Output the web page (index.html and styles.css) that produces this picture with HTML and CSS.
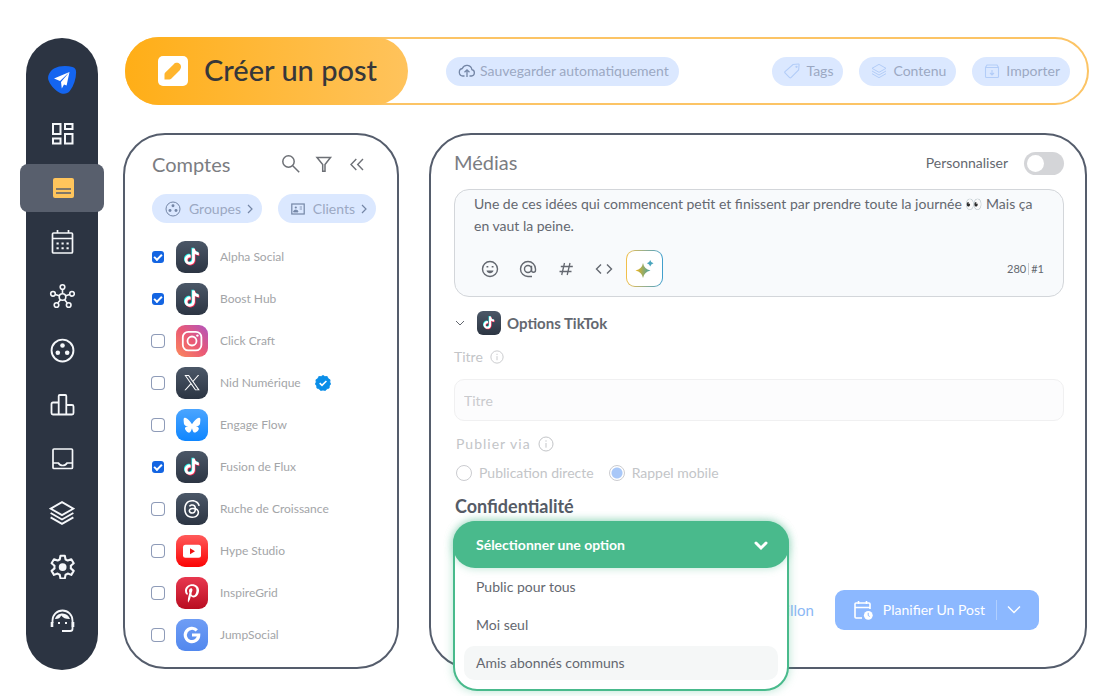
FILE: index.html
```html
<!DOCTYPE html>
<html lang="fr">

<head>
    <meta charset="UTF-8">
    <meta name="viewport" content="width=device-width, initial-scale=1">
    <title>Créer un post</title>
    <link rel="stylesheet" href="styles.css">
</head>

<body>
    <!-- shared icons -->
    <svg class="sprite" aria-hidden="true">
        <defs>
            <path id="note" d="M12.525.02c1.31-.02 2.61-.01 3.91-.02.08 1.53.63 3.09 1.75 4.17 1.12 1.11 2.7 1.62 4.24 1.79v4.03c-1.44-.05-2.89-.35-4.2-.97-.57-.26-1.1-.59-1.62-.93-.01 2.92.01 5.84-.02 8.75-.08 1.4-.54 2.79-1.35 3.94-1.31 1.92-3.58 3.17-5.91 3.21-1.43.08-2.86-.31-4.08-1.03-2.02-1.19-3.44-3.37-3.65-5.71-.02-.5-.03-1-.01-1.49.18-1.9 1.12-3.72 2.58-4.96 1.66-1.44 3.98-2.13 6.15-1.72.02 1.48-.04 2.96-.04 4.44-.99-.32-2.15-.23-3.02.37-.63.41-1.11 1.04-1.36 1.75-.21.51-.15 1.07-.14 1.61.24 1.64 1.82 3.02 3.5 2.87 1.12-.01 2.19-.66 2.77-1.61.19-.33.4-.67.41-1.06.1-1.79.06-3.57.07-5.36.01-4.03-.01-8.05.02-12.07z"/>
            <symbol id="tiktok" viewBox="0 0 32 32">
                <g transform="translate(7.6 7.4) scale(.68)">
                    <use href="#note" x="-1" y="-1" fill="#25f4ee"/>
                    <use href="#note" x="1" y="1" fill="#fe2c55"/>
                    <use href="#note" fill="#fff"/>
                </g>
            </symbol>
            <symbol id="layers" viewBox="0 0 24 24">
                <path d="M12 2 22.500 8 12 14 1.500 8zM1.500 12 12 18l10.500-6M1.500 16 12 22l10.500-6"/>
            </symbol>
            <symbol id="group" viewBox="0 0 24 24">
                <circle cx="12" cy="12" r="10.500"/>
                <g fill="currentColor" stroke="none">
                    <circle cx="12" cy="7.200" r="2.200"/>
                    <circle cx="7.500" cy="14.200" r="2.200"/>
                    <circle cx="16.500" cy="14.200" r="2.200"/>
                </g>
            </symbol>
            <symbol id="info" viewBox="0 0 24 24">
                <circle cx="12" cy="12" r="10.500"/>
                <path d="M12 10.500v7M12 6.500v2"/>
            </symbol>
        </defs>
    </svg>

    <div class="app">
        <nav class="sidebar">
            <a href="#" class="nav-item" aria-label="Accueil">
                <svg width="30" height="30" viewBox="0 0 30 30">
                    <path d="M7 3.500C12 .5 20 .3 25.500 2c2.700.8 3.700 2.500 3.600 5.500-.1 6-2.100 13-6.300 18.500-2.500 3.200-7.100 3.600-11 1.200C6.500 24 2.800 19.200 1.400 15 .2 11 2.800 6 7 3.500z" fill="#1465f0"/>
                    <path d="M22.500 7 7 13.500l6 2.600zM22.500 7 14 17l.8 6.500 2.200-4 2.600 1z" fill="#fff"/>
                </svg>
            </a>
            <a href="#" class="nav-item" aria-label="Tableau de bord">
                <svg class="icon" width="24" height="24" viewBox="0 0 24 24" stroke-width="2">
                    <rect x="3" y="2" width="7.500" height="10"/>
                    <rect x="15" y="2" width="7.500" height="5"/>
                    <rect x="3" y="16.500" width="7.500" height="5"/>
                    <rect x="15" y="12" width="7.500" height="9.500"/>
                </svg>
            </a>
            <a href="#" class="nav-item active" aria-label="Posts">
                <svg width="24" height="24" viewBox="0 0 24 24">
                    <rect x="3" y="2" width="21" height="20" rx="2" fill="#ffc55c"/>
                    <path d="M6 13h15M6 17h15" stroke="#585f6d" stroke-width="1.600"/>
                </svg>
            </a>
            <a href="#" class="nav-item" aria-label="Calendrier">
                <svg class="icon" width="26" height="26" viewBox="0 0 24 26" stroke-width="1.700">
                    <rect x="2.500" y="4" width="20" height="20" rx="1"/>
                    <path d="M2.500 9.500h20M7.500 1v3M18.500 1v3"/>
                    <path d="M6.500 14.500h2.200M11.500 14.500h2.200M16.500 14.500h2.200M6.500 19.200h2.200M11.500 19.200h2.200M16.500 19.200h2.200" stroke-width="2"/>
                </svg>
            </a>
            <a href="#" class="nav-item" aria-label="Réseau">
                <svg class="icon" width="26" height="26" viewBox="0 0 26 26" stroke-width="1.600">
                    <circle cx="13.500" cy="14" r="3.300"/>
                    <circle cx="13.500" cy="4" r="2.300"/>
                    <circle cx="4" cy="10.800" r="2.300"/>
                    <circle cx="23" cy="10.800" r="2.300"/>
                    <circle cx="7.500" cy="22" r="2.300"/>
                    <circle cx="19.700" cy="22" r="2.300"/>
                    <path d="M13.500 6.500v4M6.300 11.500l4 1.300M20.700 11.500l-4 1.300M8.800 20l2.700-3.300M18.300 20l-2.700-3.300"/>
                </svg>
            </a>
            <a href="#" class="nav-item" aria-label="Groupes">
                <svg class="icon" width="25" height="25" stroke-width="1.800"><use href="#group"/></svg>
            </a>
            <a href="#" class="nav-item" aria-label="Statistiques">
                <svg class="icon" width="25" height="24" viewBox="0 0 25 24" stroke-width="1.800" stroke-linejoin="round">
                    <path d="M8.700 22.500V4q0-1 1-1h5.600q1 0 1 1v18.500M8.700 10.500H3q-1.500 0-1.500 1.500v9q0 1.500 1.500 1.500h19q1.500 0 1.500-1.500v-6.500q0-1.500-1.500-1.500h-5.700"/>
                </svg>
            </a>
            <a href="#" class="nav-item" aria-label="Boîte de réception">
                <svg class="icon" width="24" height="24" viewBox="0 0 24 24" stroke-width="1.700">
                    <rect x="3" y="3" width="19.500" height="19.500" rx="1"/>
                    <path d="M3 17h5.300c1 1.700 2.500 2.500 4.400 2.500s3.400-.8 4.400-2.500h5.400"/>
                </svg>
            </a>
            <a href="#" class="nav-item" aria-label="Contenu">
                <svg class="icon" width="26" height="26" stroke-width="1.700"><use href="#layers" y="1"/></svg>
            </a>
            <a href="#" class="nav-item" aria-label="Réglages">
                <svg class="icon" width="26" height="26" viewBox="0 0 24 24" stroke-width="1.900" stroke-linejoin="round">
                    <g transform="translate(.6 1)">
                        <path d="M10 1.500h4l.7 3.500q1 .4 2 1l3.300-1.200 2.200 3.700-2.700 2.300q.2 1.200 0 2.400l2.700 2.300-2.200 3.700-3.300-1.200q-1 .6-2 1l-.7 3.500h-4L9.300 19q-1-.4-2-1L4 19.200l-2.200-3.700 2.700-2.300q-.2-1.200 0-2.400L1.800 8.500 4 4.800 7.300 6q1-.6 2-1z"/>
                        <circle cx="12" cy="12" r="3.600" fill="currentColor" stroke="none"/>
                    </g>
                </svg>
            </a>
            <a href="#" class="nav-item" aria-label="Assistance">
                <svg class="icon" width="26" height="26" viewBox="0 0 26 26" stroke-width="1.800">
                    <path d="M3.500 16v-2.500a10 10 0 0 1 20 0V22q0 2-2.500 2h-8"/>
                    <path d="M3 15v5M24 15v5" stroke-width="2.600"/>
                    <path d="M6 12c3.200.2 5.200-1 6.200-3.500 2 2.500 4.800 3.700 8.800 3.500-1.200-3.300-3.800-5.500-7.500-5.500S7 8.700 6 12z" fill="currentColor" stroke="none"/>
                    <path d="M9 16h2M16 16h2" stroke-width="2"/>
                </svg>
            </a>
        </nav>

        <main class="main">
            <header class="topbar">
                <div class="topbar-title">
                    <svg width="30" height="30" viewBox="0 0 30 30">
                        <rect width="30" height="30" rx="5" fill="#fff"/>
                        <path d="M6.500 23.500v-5c0-.8.3-1.400.8-1.900l8.200-8.200c2.200-2.200 4.800-1.800 6.300-.3s1.900 4.100-.3 6.300l-8.300 8.300c-.5.500-1.200.8-1.900.8z" fill="#ffb52d"/>
                    </svg>
                    <h1>Créer un post</h1>
                </div>
                <button type="button" class="chip chip-save">
                    <svg class="icon" width="18" height="16" viewBox="0 0 18 16" stroke-width="1.300">
                        <path d="M6.500 13H4.800a3.800 3.800 0 0 1-.5-7.500 5 5 0 0 1 9.600 1.200A3.200 3.200 0 0 1 13.500 13h-2M9 14V7M6.500 9.200 9 6.800l2.500 2.400"/>
                    </svg>
                    Sauvegarder automatiquement
                </button>
                <div class="topbar-actions">
                    <button type="button" class="chip chip-pale">
                        <svg class="icon" width="16" height="16" viewBox="0 0 16 16" stroke-width="1.100">
                            <path d="m9 1.500 5.500-.5q.6 0 .6.600L14.600 7 7 14.600q-.7.600-1.400 0L1 10q-.6-.7 0-1.400z"/>
                            <circle cx="12.500" cy="3.800" r=".6"/>
                        </svg>
                        Tags
                    </button>
                    <button type="button" class="chip chip-pale">
                        <svg class="icon" width="16" height="16" stroke-width="1.500"><use href="#layers"/></svg>
                        Contenu
                    </button>
                    <button type="button" class="chip chip-pale">
                        <svg class="icon" width="16" height="16" viewBox="0 0 16 16" stroke-width="1.100">
                            <path d="M1.500 4.500v9q0 1 1 1h11q1 0 1-1v-9l-1.500-2.500H3zh13M8 7v5M6 10l2 2 2-2"/>
                        </svg>
                        Importer
                    </button>
                </div>
            </header>

            <div class="panels">
                <section class="panel accounts">
                    <div class="accounts-head">
                        <h2>Comptes</h2>
                        <button type="button" class="icon-btn" aria-label="Rechercher">
                            <svg class="icon" width="20" height="20" viewBox="0 0 20 20" stroke-width="1.500">
                                <circle cx="7.500" cy="6.500" r="5.700"/>
                                <path d="m11.700 10.700 6.500 6.500"/>
                            </svg>
                        </button>
                        <button type="button" class="icon-btn" aria-label="Filtrer">
                            <svg class="icon" width="20" height="20" viewBox="0 0 20 20" stroke-width="1.500">
                                <path d="M3 2.500h13.500L11 9.500v6.700H8.700V9.500z"/>
                            </svg>
                        </button>
                        <button type="button" class="icon-btn" aria-label="Replier">
                            <svg class="icon" width="20" height="20" viewBox="0 0 20 20" stroke-width="1.400">
                                <path d="M9.300 4 4 9.500 9.300 15M16 4l-5.300 5.500L16 15"/>
                            </svg>
                        </button>
                    </div>
                    <div class="filters">
                        <button type="button" class="chip">
                            <svg class="icon" width="16" height="16" stroke-width="1.500"><use href="#group"/></svg>
                            Groupes
                            <svg class="icon arrow" width="6" height="10" viewBox="0 0 6 10" stroke-width="1.200"><path d="m1 1 4 4-4 4"/></svg>
                        </button>
                        <button type="button" class="chip">
                            <svg class="icon" width="14" height="12" viewBox="0 0 14 12" stroke-width="1.200">
                                <rect x=".8" y="1" width="12.400" height="10"/>
                                <path d="M2.500 9q0-2 2.300-2T7 9zM8.700 4H11M8.700 6H11" fill="currentColor" stroke-width=".8"/>
                                <circle cx="4.800" cy="4.500" r="1.100" fill="currentColor" stroke="none"/>
                            </svg>
                            Clients
                            <svg class="icon arrow" width="6" height="10" viewBox="0 0 6 10" stroke-width="1.200"><path d="m1 1 4 4-4 4"/></svg>
                        </button>
                    </div>
                    <ul class="account-list">
                        <li><label>
                            <input type="checkbox" checked>
                            <svg class="logo dark"><use href="#tiktok"/></svg>
                            <span>Alpha Social</span>
                        </label></li>
                        <li><label>
                            <input type="checkbox" checked>
                            <svg class="logo dark"><use href="#tiktok"/></svg>
                            <span>Boost Hub</span>
                        </label></li>
                        <li><label>
                            <input type="checkbox">
                            <svg class="logo instagram" viewBox="0 0 32 32" fill="none" stroke="#fff" stroke-width="1.800">
                                <rect x="6.800" y="6.800" width="18.600" height="18.600" rx="5.500"/>
                                <circle cx="16" cy="16" r="4.500"/>
                                <circle cx="21.400" cy="10.600" r="1.200" fill="#fff" stroke="none"/>
                            </svg>
                            <span>Click Craft</span>
                        </label></li>
                        <li><label>
                            <input type="checkbox">
                            <svg class="logo dark" viewBox="0 0 32 32">
                                <path transform="translate(8.400 8) scale(.64)" fill="#fff" d="M14.258 10.152L23.176 0h-2.113l-7.747 8.813L7.133 0H0l9.352 13.328L0 23.973h2.113l8.176-9.309 6.531 9.309h7.133zm-2.895 3.293l-.949-1.328L2.875 1.560h3.246l6.086 8.523.945 1.328 7.910 11.078h-3.246z"/>
                            </svg>
                            <span>Nid Numérique</span>
                            <svg class="verified" width="16" height="16" viewBox="0 0 16 16">
                                <path d="m8 .4 1.900 1.200 2.300-.1.900 2.100 2 1.200-.3 2.300.8 1.900-1.300 1.900-.2 2.200-2.200.7-1.500 1.700L8 15.100l-2.400.4-1.500-1.700-2.200-.7-.2-2.200L.4 9l.8-1.900-.3-2.300 2-1.200.9-2.100 2.300.1z" fill="#0a8ee8" stroke="#0a8ee8" stroke-linejoin="round" stroke-width=".8"/>
                                <path d="m4.700 8.200 2.300 2.200 4.400-4.400" fill="none" stroke="#fff" stroke-width="1.600"/>
                            </svg>
                        </label></li>
                        <li><label>
                            <input type="checkbox">
                            <svg class="logo bluesky" viewBox="0 0 32 32">
                                <path transform="translate(7.600 7.800) scale(.7)" fill="#fff" d="M12 10.800c-1.087-2.114-4.046-6.053-6.798-7.995C2.566.944 1.561 1.266.902 1.565.139 1.908 0 3.080 0 3.768c0 .69.378 5.650.624 6.479.815 2.736 3.713 3.660 6.383 3.364-3.912.58-7.387 2.005-2.830 7.078 5.013 5.190 6.870-1.113 7.823-4.308.953 3.195 2.050 9.271 7.733 4.308 4.267-4.308 1.172-6.498-2.740-7.078 2.670.297 5.568-.628 6.383-3.364.246-.828.624-5.790.624-6.478 0-.69-.139-1.861-.902-2.206-.659-.298-1.664-.62-4.300 1.240C16.046 4.748 13.087 8.687 12 10.800z"/>
                            </svg>
                            <span>Engage Flow</span>
                        </label></li>
                        <li><label>
                            <input type="checkbox" checked>
                            <svg class="logo dark"><use href="#tiktok"/></svg>
                            <span>Fusion de Flux</span>
                        </label></li>
                        <li><label>
                            <input type="checkbox">
                            <svg class="logo dark" viewBox="0 0 32 32">
                                <path transform="translate(7 7) scale(.75)" fill="#fff" d="M12.186 24h-.007c-3.581-.024-6.334-1.205-8.184-3.509C2.350 18.440 1.500 15.586 1.472 12.010v-.017c.03-3.579.879-6.430 2.525-8.482C5.845 1.205 8.600.024 12.180 0h.014c2.746.02 5.043.725 6.826 2.098 1.677 1.290 2.858 3.130 3.509 5.467l-2.040.569c-1.104-3.960-3.898-5.984-8.304-6.015-2.910.022-5.110.936-6.540 2.717C4.307 6.504 3.616 8.914 3.589 12c.027 3.086.718 5.496 2.057 7.164 1.430 1.783 3.631 2.698 6.540 2.717 2.623-.02 4.358-.631 5.800-2.045 1.647-1.613 1.618-3.593 1.090-4.798-.31-.71-.873-1.300-1.634-1.750-.192 1.352-.622 2.446-1.284 3.272-.886 1.102-2.140 1.704-3.730 1.790-1.202.065-2.361-.218-3.259-.801-1.063-.689-1.685-1.740-1.752-2.964-.065-1.190.408-2.285 1.330-3.082.88-.76 2.119-1.207 3.583-1.291a13.853 13.853 0 0 1 3.020.142c-.126-.742-.375-1.332-.75-1.757-.513-.586-1.308-.883-2.359-.89h-.029c-.844 0-1.992.232-2.721 1.320L7.734 7.847c.98-1.454 2.568-2.256 4.478-2.256h.044c3.194.02 5.097 1.975 5.287 5.388.108.046.216.094.321.142 1.490.7 2.580 1.761 3.154 3.070.797 1.820.871 4.790-1.548 7.158-1.850 1.810-4.094 2.628-7.277 2.650zm1.003-11.690c-.242 0-.487.007-.739.021-1.836.103-2.980.946-2.916 2.143.067 1.256 1.452 1.839 2.784 1.767 1.224-.065 2.818-.543 3.086-3.710a10.500 10.500 0 0 0-2.215-.221z"/>
                            </svg>
                            <span>Ruche de Croissance</span>
                        </label></li>
                        <li><label>
                            <input type="checkbox">
                            <svg class="logo youtube" viewBox="0 0 32 32">
                                <rect x="7" y="9.700" width="18" height="13" rx="2.500" fill="#fff"/>
                                <path d="m14 13.200 5 3-5 3z" fill="#f01010"/>
                            </svg>
                            <span>Hype Studio</span>
                        </label></li>
                        <li><label>
                            <input type="checkbox">
                            <svg class="logo pinterest" viewBox="0 0 32 32">
                                <path transform="translate(9 7) scale(.0365)" fill="#fff" d="M204 6.500C101.400 6.500 0 74.900 0 185.600 0 256 39.600 296 63.600 296c9.900 0 15.600-27.600 15.600-35.400 0-9.300-23.700-29.100-23.700-67.800 0-80.400 61.200-137.400 140.400-137.400 68.100 0 118.500 38.700 118.500 109.800 0 53.100-21.300 152.700-90.300 152.700-24.900 0-46.200-18-46.200-43.800 0-37.800 26.400-74.400 26.400-113.400 0-66.200-93.900-54.200-93.900 25.800 0 16.800 2.100 35.400 9.600 50.700-13.800 59.400-42 147.900-42 209.100 0 18.900 2.700 37.500 4.500 56.400 3.400 3.800 1.700 3.400 6.900 1.500 50.400-69 48.600-82.500 71.400-172.800 12.300 23.400 44.100 36 69.300 36 106.200 0 153.900-103.500 153.900-196.800C384 71.300 298.200 6.500 204 6.500z"/>
                            </svg>
                            <span>InspireGrid</span>
                        </label></li>
                        <li><label>
                            <input type="checkbox">
                            <svg class="logo google" viewBox="0 0 32 32" fill="none" stroke="#fff" stroke-width="3.200">
                                <path d="M20.800 11.300A6.700 6.700 0 1 0 22.700 16H16"/>
                            </svg>
                            <span>JumpSocial</span>
                        </label></li>
                    </ul>
                </section>

                <section class="panel editor">
                    <div class="editor-head">
                        <h2>Médias</h2>
                        <label class="switch-label" for="custom">Personnaliser</label>
                        <input type="checkbox" class="switch" id="custom">
                    </div>

                    <div class="composer">
                        <textarea rows="2" aria-label="Texte du post">Une de ces idées qui commencent petit et finissent par prendre toute la journée 👀 Mais ça en vaut la peine.</textarea>
                        <div class="tools">
                            <button type="button" class="tool" aria-label="Emoji">
                                <svg class="icon" width="18" height="18" viewBox="0 0 18 18" stroke-width="1.400">
                                    <circle cx="9" cy="9" r="7.500"/>
                                    <path d="M5.500 6.800h1.800M10.700 6.800h1.800" stroke-width="1.600"/>
                                    <path d="M5.500 10.500h7c-.5 1.800-1.800 2.700-3.500 2.700s-3-.9-3.500-2.700z" fill="currentColor" stroke="none"/>
                                </svg>
                            </button>
                            <button type="button" class="tool" aria-label="Mention">
                                <svg class="icon" width="18" height="18" viewBox="0 0 18 18" stroke-width="1.400">
                                    <circle cx="9" cy="9" r="3.500"/>
                                    <path d="M12.500 5.800v4.400a2 2 0 0 0 4 0V9A7.500 7.500 0 1 0 9 16.500h4"/>
                                </svg>
                            </button>
                            <button type="button" class="tool" aria-label="Hashtag">
                                <svg class="icon" width="18" height="18" viewBox="0 0 18 18" stroke-width="1.300">
                                    <path d="M7.500 3 4.700 15M13 3l-2.800 12M3.800 6.500h12M2.500 11.500h12"/>
                                </svg>
                            </button>
                            <button type="button" class="tool" aria-label="Code">
                                <svg class="icon" width="18" height="18" viewBox="0 0 18 18" stroke-width="1.400">
                                    <path d="M6 4.500 1.500 9 6 13.500M12 4.500 16.500 9 12 13.500"/>
                                </svg>
                            </button>
                            <button type="button" class="ai-btn" aria-label="Assistant IA">
                                <svg width="20" height="20" viewBox="0 0 20 20">
                                    <linearGradient id="spark" x1="0" x2="1"><stop offset="0" stop-color="#f0b41c"/><stop offset="1" stop-color="#45a3a8"/></linearGradient>
                                    <path d="M8 4q1 6 7.500 7.500Q9 13 8 19q-1-6-7.500-7.500Q7 10 8 4z" fill="url(#spark)"/>
                                    <path d="M15.200 1q.6 2.700 3.300 3.300-2.700.6-3.300 3.300-.6-2.700-3.300-3.300 2.700-.6 3.300-3.300z" fill="#4aa5bd"/>
                                </svg>
                            </button>
                            <div class="counter"><span>280</span><span>#1</span></div>
                        </div>
                    </div>

                    <div class="options-head">
                        <svg class="icon" width="12" height="12" viewBox="0 0 12 12" stroke-width="1"><path d="m2 4 4 4 4-4"/></svg>
                        <svg class="logo dark small"><use href="#tiktok"/></svg>
                        <h3>Options TikTok</h3>
                    </div>

                    <div class="field-label">
                        <label for="titre">Titre</label>
                        <svg class="icon" width="14" height="14" stroke-width="1.500"><use href="#info"/></svg>
                    </div>
                    <input type="text" class="text-input" id="titre" placeholder="Titre">

                    <div class="field-label via">
                        <span id="via">Publier via</span>
                        <svg class="icon" width="16" height="16" stroke-width="1.500"><use href="#info"/></svg>
                    </div>
                    <div class="radios" role="radiogroup" aria-labelledby="via">
                        <label><input type="radio" name="via"><span>Publication directe</span></label>
                        <label><input type="radio" name="via" checked><span>Rappel mobile</span></label>
                    </div>

                    <label class="privacy-label" for="privacy">Confidentialité</label>
                    <div class="dropdown">
                        <select id="privacy">
                            <option>Sélectionner une option</option>
                        </select>
                        <svg class="icon dropdown-arrow" width="14" height="10" viewBox="0 0 14 10" stroke-width="3" stroke-linecap="round"><path d="m2 2 5 5 5-5"/></svg>
                        <ul class="menu" role="listbox" aria-label="Confidentialité">
                            <li role="option">Public pour tous</li>
                            <li role="option">Moi seul</li>
                            <li role="option" class="hover">Amis abonnés communs</li>
                        </ul>
                    </div>

                    <div class="editor-foot">
                        <a href="#" class="draft">Brouillon</a>
                        <button type="button" class="schedule">
                            <svg class="icon" width="20" height="20" viewBox="0 0 20 20" stroke-width="1.600">
                                <path d="M9 18H3q-1 0-1-1V4q0-1 1-1h13q1 0 1 1v5M2 7.500h15M5.500 1v3M13.500 1v3"/>
                                <circle cx="15.300" cy="15.300" r="4.400" fill="#fff" stroke="none"/>
                                <path d="M15.200 12.800v2.700l1.500 1" stroke="#8cb8ff" stroke-width="1"/>
                            </svg>
                            <span class="schedule-text">Planifier Un Post</span>
                            <svg class="icon" width="14" height="10" viewBox="0 0 14 10" stroke-width="1.400"><path d="m1 1.500 6 6 6-6"/></svg>
                        </button>
                    </div>
                </section>
            </div>
        </main>
    </div>
</body>

</html>
```
FILE: styles.css
```css
* {
    box-sizing: border-box;
}

body {
    margin: 0;
    background-color: #fff;
    color: #646870;
    font-family: Lato, "Liberation Sans", sans-serif;
    font-size: 14px;
    line-height: 20px;
}

h1,
h2,
h3,
ul {
    margin: 0;
    padding: 0;
}

ul {
    list-style: none;
}

button,
input,
select,
textarea {
    font: inherit;
    color: inherit;
}

button {
    border: none;
    padding: 0;
    background: none;
}

svg {
    display: block;
    flex-shrink: 0;
}

.sprite {
    position: absolute;
    width: 0;
    height: 0;
}

.icon {
    fill: none;
    stroke: currentColor;
}

.app {
    display: flex;
    align-items: flex-start;
    gap: 25px;
    padding: 37px 19px 26px 26px;
}

/* sidebar */
.sidebar {
    display: flex;
    flex-direction: column;
    gap: 6px;
    flex: 0 0 72px;
    margin-top: 1px;
    padding: 18px 0 26px;
    border-radius: 36px;
    background-color: #2c3442;
}

.nav-item {
    display: flex;
    align-items: center;
    justify-content: center;
    height: 48px;
    color: #f5f7fa;
}

.nav-item.active {
    margin: 0 -6px;
    border-radius: 8px;
    background-color: #585f6d;
}

/* top bar */
.main {
    flex: 1;
    min-width: 0;
}

.topbar {
    display: flex;
    align-items: center;
    height: 68px;
    margin-left: 2px;
    padding-right: 17px;
    border: 2px solid #fcc465;
    border-radius: 34px;
}

.topbar-title {
    display: flex;
    align-items: center;
    gap: 16px;
    width: 283px;
    height: 68px;
    margin: -2px 38px -2px -2px;
    padding-left: 33px;
    border-radius: 34px;
    background: linear-gradient(90deg, #ffae17, #ffc35c);
}

.topbar-title h1 {
    padding-bottom: 2px;
    color: #36373a;
    font-size: 29px;
    font-weight: 500;
    line-height: 36px;
}

.topbar-actions {
    display: flex;
    gap: 16px;
    margin-left: auto;
}

.chip {
    display: flex;
    align-items: center;
    gap: 8px;
    height: 29px;
    padding: 0 10px 0 12px;
    border-radius: 15px;
    background-color: #dbe8ff;
    color: #9ba8c3;
    white-space: nowrap;
}

.chip .icon {
    color: #7486a6;
}

.chip-save {
    gap: 4px;
}

.chip-pale {
    gap: 6px;
}

.chip-pale .icon {
    color: #b3cdf8;
}

/* panels */
.panels {
    display: flex;
    gap: 30px;
    margin: 28px 2px 0 0;
}

.panel {
    border: 2px solid #555d6c;
    border-radius: 42px;
}

.panel h2 {
    padding-bottom: 2px;
    color: #7b7d82;
    font-size: 20px;
    font-weight: 400;
    line-height: 24px;
}

.accounts {
    flex: 0 0 276px;
    padding: 15px 21px 16px 27px;
}

.accounts-head {
    display: flex;
    align-items: center;
    gap: 13px;
    height: 30px;
    padding-right: 9px;
}

.accounts-head h2 {
    flex: 1;
}

.icon-btn {
    color: #6d7076;
}

.filters {
    display: flex;
    justify-content: space-between;
    margin: 14px 0 18px;
}

.filters .chip {
    padding: 0 9px 0 13px;
}

.filters .arrow {
    margin-left: -2px;
}

.account-list {
    display: flex;
    flex-direction: column;
    gap: 10px;
    color: #a3a5a8;
    font-size: 12px;
}

.account-list label {
    display: flex;
    align-items: center;
    gap: 12px;
    height: 32px;
}

.account-list input {
    appearance: none;
    width: 12px;
    height: 12px;
    margin: 0;
    border-radius: 3px;
    box-shadow: 0 0 0 1px #8e9bb8;
}

.account-list input:checked {
    background-color: #1465e2;
    box-shadow: none;
}

.account-list input:checked::after {
    content: "";
    display: block;
    box-sizing: border-box;
    width: 8px;
    height: 5px;
    margin: 3px 2px;
    border: solid #fff;
    border-width: 0 0 2px 2px;
    transform: rotate(-45deg);
}

.verified {
    margin-left: 2px;
}

.logo {
    width: 32px;
    height: 32px;
    border-radius: 9px;
}

.logo.small {
    width: 24px;
    height: 24px;
    border-radius: 6px;
}

.dark {
    background: linear-gradient(#4b5767, #2c3543);
}

.instagram {
    background: linear-gradient(45deg, #fb8a5c, #ea5a75 50%, #b054c0);
}

.bluesky {
    background: linear-gradient(#4ba5ff, #0f86ff);
}

.youtube {
    background: linear-gradient(#ff5a5a, #fb0505);
}

.pinterest {
    background: linear-gradient(#e8384f, #b90d21);
}

.google {
    background: linear-gradient(#6f9df5, #5288ee);
}

/* editor */
.editor {
    flex: 1;
    min-width: 0;
    padding: 16px 21px 37px 23px;
}

.editor-head {
    display: flex;
    align-items: center;
    gap: 16px;
    height: 24px;
}

.editor-head h2 {
    flex: 1;
}

.switch {
    appearance: none;
    width: 40px;
    height: 23px;
    margin: 0;
    padding: 3px;
    border-radius: 12px;
    background-color: #d4d5d8;
}

.switch::before {
    content: "";
    display: block;
    width: 17px;
    height: 17px;
    border-radius: 50%;
    background-color: #fff;
}

.composer {
    height: 108px;
    margin-top: 14px;
    padding: 3px 19px 0;
    border: 1px solid #d3d6da;
    border-radius: 15px;
    background-color: #f8fafc;
}

.composer textarea {
    display: block;
    width: 100%;
    height: 44px;
    padding: 0;
    border: none;
    outline: none;
    resize: none;
    overflow: hidden;
    background: none;
    line-height: 22px;
}

.tools {
    display: flex;
    align-items: center;
    gap: 20px;
    margin-top: 13px;
    padding-left: 7px;
}

.ai-btn {
    display: flex;
    align-items: center;
    justify-content: center;
    width: 37px;
    height: 37px;
    margin-left: -7px;
    border: 1px solid transparent;
    border-radius: 9px;
    background: linear-gradient(#fff, #fff) padding-box, linear-gradient(90deg, #f3c04a, #3f9fce) border-box;
}

.counter {
    display: flex;
    margin-left: auto;
    font-size: 11px;
    line-height: 12px;
}

.counter span + span {
    margin-left: 2px;
    padding-left: 2px;
    border-left: 1px solid #c9ccd1;
}

.options-head {
    display: flex;
    align-items: center;
    margin-top: 14px;
}

.options-head .logo {
    margin: 0 6px 0 11px;
}

.options-head h3 {
    font-size: 15px;
    font-weight: 700;
}

.field-label {
    display: flex;
    align-items: center;
    gap: 7px;
    height: 20px;
    margin: 12px 0;
    color: #c3c5c8;
}

.field-label.via {
    margin: 13px 2px 9px;
    letter-spacing: 1px;
}

.text-input {
    display: block;
    width: 100%;
    height: 42px;
    padding: 0 9px;
    border: 1px solid #f0f0f1;
    border-radius: 10px;
    background-color: #fcfcfd;
}

.text-input::placeholder {
    color: #c9cacd;
}

.radios {
    display: flex;
    gap: 15px;
    height: 20px;
    padding-left: 2px;
    color: #c3c5c8;
}

.radios label {
    display: flex;
    align-items: center;
    gap: 7px;
}

.radios input {
    appearance: none;
    width: 16px;
    height: 16px;
    margin: 0;
    border: 1px solid #cbccd0;
    border-radius: 50%;
}

.radios input:checked {
    background: radial-gradient(circle, #a9c8f8 5px, transparent 6px);
}

.privacy-label {
    display: block;
    margin: 11px 0 3px 1px;
    color: #555b66;
    font-size: 18px;
    font-weight: 700;
    line-height: 24px;
}

.dropdown {
    position: relative;
    z-index: 1;
    width: 336px;
    height: 47px;
    margin-left: -1px;
}

.dropdown select {
    position: relative;
    z-index: 1;
    appearance: none;
    width: 100%;
    height: 100%;
    padding: 0 23px;
    border: none;
    border-radius: 22px;
    background-color: #49ba8c;
    box-shadow: 0 0 8px #49ba8c66;
    color: #fff;
    font-weight: 700;
}

.dropdown-arrow {
    position: absolute;
    z-index: 2;
    top: 20px;
    right: 21px;
    color: #fff;
}

.menu {
    position: absolute;
    top: 0;
    left: 0;
    right: 0;
    padding: 47px 9px 9px;
    border: 2px solid #49ba8c;
    border-radius: 24px;
    background-color: #fff;
    box-shadow: 0 0 10px #49ba8c66;
}

.menu li {
    margin-bottom: 4px;
    padding: 7px 12px;
    border-radius: 10px;
}

.menu li:last-child {
    margin-bottom: 0;
}

.menu .hover {
    background-color: #f5f7f7;
}

.editor-foot {
    display: flex;
    align-items: center;
    justify-content: flex-end;
    gap: 21px;
    margin-top: 22px;
    padding-right: 25px;
}

.draft {
    color: #8cb8f5;
    font-size: 15px;
    text-decoration: none;
}

.schedule {
    display: flex;
    align-items: center;
    height: 40px;
    padding: 0 18px;
    border-radius: 9px;
    background-color: #8cb8ff;
    color: #fff;
}

.schedule-text {
    margin: 0 10px;
    padding-right: 11px;
    border-right: 1px solid #b0cfff;
}
```
